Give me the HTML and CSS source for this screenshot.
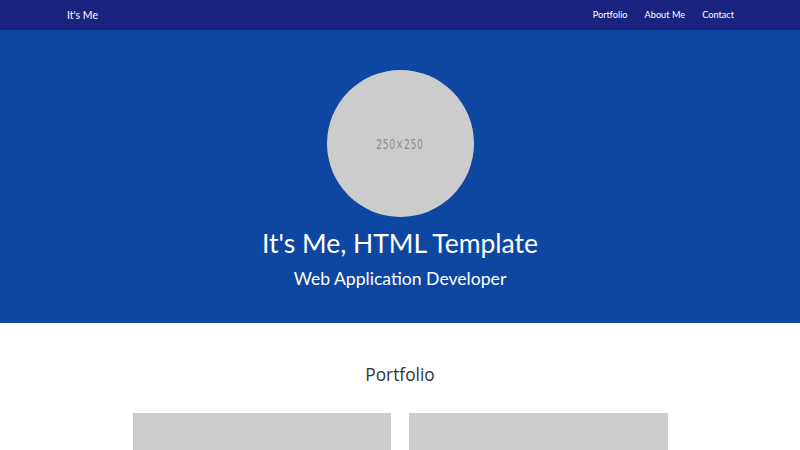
FILE: index.html
```html
<!DOCTYPE html>
<html>
<head>
<meta charset="utf-8">
<link rel="stylesheet" href="styles.css">
</head>
<body>
<nav class="navbar">
  <div class="nav-inner">
    <a class="brand" href="#">It's Me</a>
    <ul class="nav-links">
      <li><a href="#">Portfolio</a></li>
      <li><a href="#">About Me</a></li>
      <li><a href="#">Contact</a></li>
    </ul>
  </div>
</nav>
<header class="hero">
  <div class="avatar"><span>250×250</span></div>
  <h1 class="hero-title">It's Me, HTML Template</h1>
  <p class="hero-sub">Web Application Developer</p>
</header>
<section class="portfolio">
  <h2 class="section-title">Portfolio</h2>
  <div class="grid">
    <div class="card"></div>
    <div class="card"></div>
  </div>
</section>
</body>
</html>
```
FILE: styles.css
```css
* { box-sizing: border-box; }
html, body { margin: 0; padding: 0; }
body { font-family: Lato, "Liberation Sans", sans-serif; background: #fff; overflow: hidden; }
.navbar { background: #1a237e; height: 30px; }
.nav-inner { width: 668px; margin: 0 0 0 67px; height: 30px; display: flex; align-items: center; justify-content: space-between; }
.brand { color: #fff; text-decoration: none; font-size: 10.5px; line-height: 14px; display: block; }
.nav-links { list-style: none; margin: 0; padding: 0 1px 0 0; display: flex; align-items: center; gap: 17px; }
.nav-links li { display: block; line-height: 14px; }
.nav-links a { color: #fff; text-decoration: none; font-size: 9.2px; line-height: 14px; display: block; }
.hero { background: #0d47a1; height: 293px; padding-top: 40px; display: flex; flex-direction: column; align-items: center; color: #fff; }
.avatar { width: 147px; height: 147px; border-radius: 50%; background: #cccccc; display: flex; align-items: center; justify-content: center; }
.avatar span { font-family: "DejaVu Sans Condensed", "DejaVu Sans", sans-serif; color: #8c8c8c; font-size: 14px; letter-spacing: 1px; transform: scaleX(0.72); }
.hero-title { margin: 10px 0 0; font-size: 26.5px; font-weight: 400; line-height: 32px; }
.hero-sub { margin: 8px 0 0; font-size: 17.6px; line-height: 24px; }
.portfolio { display: flex; flex-direction: column; align-items: center; }
.section-title { margin: 40px 0 0; font-family: "Open Sans", sans-serif; font-weight: 400; font-size: 17.3px; color: #333; line-height: 24px; }
.grid { margin-top: 26px; width: 535px; display: grid; grid-template-columns: 1fr 1fr; gap: 18px; }
.card { height: 200px; background: #cccccc; }
```
